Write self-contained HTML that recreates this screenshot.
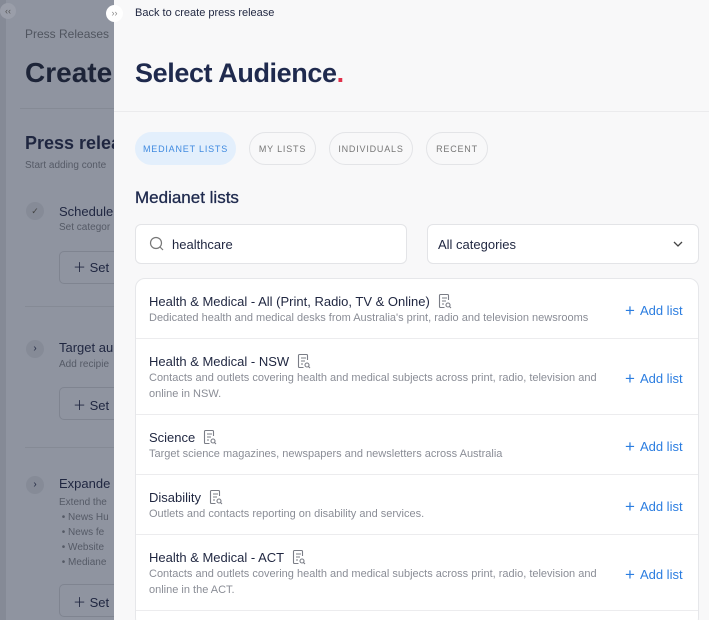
<!DOCTYPE html>
<html style="width:709px;height:620px;overflow:hidden"><head><meta charset="utf-8"><style>
*{box-sizing:border-box;margin:0;padding:0}
body{width:709px;height:620px;overflow:hidden;font-family:"Liberation Sans",sans-serif;background:#8f94a0;position:relative}
.l{position:absolute;color:#1f2640}
.strip{position:absolute;left:0;top:0;width:6px;height:620px;background:#858a96}
.panel{position:absolute;left:114px;top:0;width:595px;height:620px;background:#f8f8f9}
.a{position:absolute}
.pill{position:absolute;top:132px;height:33px;border-radius:17px;border:1.5px solid #e3e4e7;background:#f8f8f9;font-size:9px;letter-spacing:.8px;color:#777;display:flex;align-items:center;justify-content:center}
.card{position:absolute;left:135px;top:278px;width:564px;height:350px;background:#fff;border:1px solid #e6e7ea;border-radius:10px}
.row{position:absolute;left:0;width:562px;border-bottom:1px solid #ececee}
.t{position:absolute;left:13px;font-size:13px;color:#1f2640;display:flex;align-items:center;gap:8px}
.d{position:absolute;left:13px;font-size:11px;color:#8a8d96;line-height:16px;width:450px}
.add{position:absolute;left:489px;font-size:13px;color:#2b7de0}
.add b{font-weight:normal;font-size:17px;margin-right:5px;position:relative;top:1px}
</style></head><body>
<div class="strip"></div>
<div class="l" style="left:0;top:3px;width:16px;height:16px;border-radius:8px;background:#9a9ea9;color:#555;font-size:9px;text-align:center;line-height:16px">‹‹</div>
<div class="l" style="left:25px;top:27px;font-size:12px;color:#50555f">Press Releases</div>
<div class="l" style="left:25px;top:57px;font-size:28px;font-weight:bold;color:#1d2438">Create</div>
<div class="a" style="left:20px;top:108px;width:94px;height:1px;background:#858a95"></div>
<div class="l" style="left:25px;top:133px;font-size:18px;font-weight:bold">Press releas</div>
<div class="l" style="left:25px;top:160px;font-size:10px;color:#555a66">Start adding conte</div>
<div class="a" style="left:26px;top:202px;width:18px;height:18px;border-radius:9px;background:#868b97;color:#444;font-size:9px;text-align:center;line-height:18px">✓</div>
<div class="l" style="left:59px;top:204px;font-size:13px">Schedule</div>
<div class="l" style="left:59px;top:222px;font-size:10px;color:#555a66">Set categor</div>
<div class="a" style="left:59px;top:251px;width:60px;height:33px;border:1px solid #7f8490;border-radius:5px"></div>
<div class="l" style="left:73px;top:257px;font-size:13px">＋ Set</div>
<div class="a" style="left:25px;top:306px;width:89px;height:1px;background:#858a95"></div>
<div class="a" style="left:26px;top:340px;width:18px;height:18px;border-radius:9px;background:#868b97;color:#1f2640;font-size:10px;text-align:center;line-height:17px">›</div>
<div class="l" style="left:59px;top:340px;font-size:13px">Target au</div>
<div class="l" style="left:59px;top:359px;font-size:10px;color:#555a66">Add recipie</div>
<div class="a" style="left:59px;top:387px;width:60px;height:33px;border:1px solid #7f8490;border-radius:5px"></div>
<div class="l" style="left:73px;top:395px;font-size:13px">＋ Set</div>
<div class="a" style="left:25px;top:447px;width:89px;height:1px;background:#858a95"></div>
<div class="a" style="left:26px;top:476px;width:18px;height:18px;border-radius:9px;background:#868b97;color:#1f2640;font-size:10px;text-align:center;line-height:17px">›</div>
<div class="l" style="left:59px;top:476px;font-size:13px">Expande</div>
<div class="l" style="left:59px;top:495px;font-size:10px;color:#555a66;line-height:15px">Extend the<br>&nbsp;• News Hu<br>&nbsp;• News fe<br>&nbsp;• Website<br>&nbsp;• Mediane</div>
<div class="a" style="left:59px;top:584px;width:60px;height:33px;border:1px solid #7f8490;border-radius:5px"></div>
<div class="l" style="left:73px;top:592px;font-size:13px">＋ Set</div>

<div class="panel"></div>
<div class="a" style="left:106px;top:5px;width:17px;height:17px;border-radius:9px;background:#fff;color:#888;font-size:9px;text-align:center;line-height:16px">››</div>
<div class="a" style="left:135px;top:7px;font-size:11px;color:#1f2640">Back to create press release</div>
<div class="a" style="left:135px;top:58px;font-size:27px;font-weight:bold;color:#1f2a4e;letter-spacing:-.4px">Select Audience<span style="color:#e0314b">.</span></div>
<div class="a" style="left:114px;top:111px;width:595px;height:1px;background:#ebebed"></div>
<div class="pill" style="left:135px;width:101px;background:#e3effc;border-color:#e3effc;color:#3f8ae0">MEDIANET LISTS</div>
<div class="pill" style="left:249px;width:67px">MY LISTS</div>
<div class="pill" style="left:329px;width:84px">INDIVIDUALS</div>
<div class="pill" style="left:426px;width:62px">RECENT</div>
<div class="a" style="left:135px;top:188px;font-size:17px;color:#1f2a4e;-webkit-text-stroke:.3px #1f2a4e">Medianet lists</div>
<div class="a" style="left:135px;top:224px;width:272px;height:40px;background:#fff;border:1px solid #e3e4e7;border-radius:6px"></div>
<svg class="a" style="left:149px;top:236px" width="16" height="16" viewBox="0 0 16 16"><circle cx="7" cy="7" r="5.5" fill="none" stroke="#777" stroke-width="1.2"/><path d="M11 11l3 3" stroke="#777" stroke-width="1.2"/></svg>
<div class="a" style="left:172px;top:237px;font-size:13px;color:#1f2640">healthcare</div>
<div class="a" style="left:427px;top:224px;width:272px;height:40px;background:#fff;border:1px solid #e3e4e7;border-radius:6px"></div>
<div class="a" style="left:438px;top:237px;font-size:13px;color:#1f2640">All categories</div>
<svg class="a" style="left:673px;top:240px" width="10" height="8" viewBox="0 0 10 8"><path d="M1 2l4 4 4-4" fill="none" stroke="#444" stroke-width="1.3"/></svg>

<svg width="0" height="0" style="position:absolute"><defs><symbol id="ic" viewBox="0 0 14 16"><path d="M10.5 7V2.5a1 1 0 0 0-1-1h-7a1 1 0 0 0-1 1v11a1 1 0 0 0 1 1h4" fill="none" stroke="#7a7d86" stroke-width="1.1"/><path d="M4 5h5M4 8h4M4 11h2" stroke="#7a7d86" stroke-width="1.1"/><circle cx="10" cy="12" r="2" fill="none" stroke="#7a7d86" stroke-width="1.1"/><path d="M11.5 13.5l1.5 1.5" stroke="#7a7d86" stroke-width="1.1"/></symbol></defs></svg>

<div class="card">
<div class="row" style="top:0;height:60px"><div class="t" style="top:14px">Health &amp; Medical - All (Print, Radio, TV &amp; Online)<svg width="14" height="16"><use href="#ic"/></svg></div><div class="d" style="top:31px">Dedicated health and medical desks from Australia's print, radio and television newsrooms</div><div class="add" style="top:21px"><b>+</b>Add list</div></div>
<div class="row" style="top:60px;height:76px"><div class="t" style="top:14px">Health &amp; Medical - NSW<svg width="14" height="16"><use href="#ic"/></svg></div><div class="d" style="top:31px">Contacts and outlets covering health and medical subjects across print, radio, television and online in NSW.</div><div class="add" style="top:29px"><b>+</b>Add list</div></div>
<div class="row" style="top:136px;height:60px"><div class="t" style="top:14px">Science<svg width="14" height="16"><use href="#ic"/></svg></div><div class="d" style="top:31px">Target science magazines, newspapers and newsletters across Australia</div><div class="add" style="top:21px"><b>+</b>Add list</div></div>
<div class="row" style="top:196px;height:60px"><div class="t" style="top:14px">Disability<svg width="14" height="16"><use href="#ic"/></svg></div><div class="d" style="top:31px">Outlets and contacts reporting on disability and services.</div><div class="add" style="top:21px"><b>+</b>Add list</div></div>
<div class="row" style="top:256px;height:76px"><div class="t" style="top:14px">Health &amp; Medical - ACT<svg width="14" height="16"><use href="#ic"/></svg></div><div class="d" style="top:31px">Contacts and outlets covering health and medical subjects across print, radio, television and online in the ACT.</div><div class="add" style="top:29px"><b>+</b>Add list</div></div>
</div>
</body></html>
